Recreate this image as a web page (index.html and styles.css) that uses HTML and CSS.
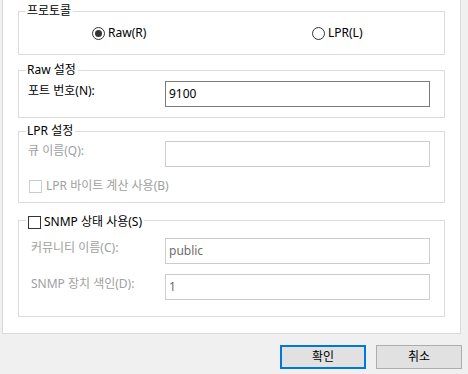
FILE: index.html
```html
<!DOCTYPE html>
<html lang="ko">
<head>
<meta charset="utf-8">
<link rel="stylesheet" href="styles.css">
</head>
<body>
<div class="panel">
  <div class="group g1">
    <div class="legend">프로토콜</div>
    <div class="radio-row">
      <label class="radio-item first"><span class="radio checked"></span><span>Raw(R)</span></label>
      <label class="radio-item"><span class="radio"></span><span>LPR(L)</span></label>
    </div>
  </div>
  <div class="group g2">
    <div class="legend">Raw 설정</div>
    <div class="field first-field">
      <span class="label">포트 번호(N):</span>
      <div class="input">9100</div>
    </div>
  </div>
  <div class="group g3">
    <div class="legend">LPR 설정</div>
    <div class="field first-field disabled">
      <span class="label">큐 이름(Q):</span>
      <div class="input"></div>
    </div>
    <label class="check-row disabled"><span class="check"></span><span>LPR 바이트 계산 사용(B)</span></label>
  </div>
  <div class="group g4">
    <div class="legend check-legend"><span class="check"></span><span>SNMP 상태 사용(S)</span></div>
    <div class="field first-field disabled indent">
      <span class="label">커뮤니티 이름(C):</span>
      <div class="input">public</div>
    </div>
    <div class="field second-field disabled indent">
      <span class="label">SNMP 장치 색인(D):</span>
      <div class="input">1</div>
    </div>
  </div>
</div>
<div class="buttons">
  <button class="btn default">확인</button>
  <button class="btn">취소</button>
</div>
</body>
</html>
```
FILE: styles.css
```css
* { box-sizing: border-box; }
html, body {
  margin: 0;
  padding: 0;
  width: 468px;
  height: 374px;
  overflow: hidden;
  background: #f0f0f0;
  font-family: "Noto Sans", "Noto Sans CJK KR", sans-serif;
  font-size: 12px;
  color: #000;
}
.panel {
  margin-left: 2px;
  width: 459px;
  background: #fff;
  border: 1px solid #d9d9d9;
  border-top: none;
  padding: 11px 15px 16px 15px;
}
.group {
  border: 1px solid #dcdcdc;
  box-sizing: content-box;
}
.g1 { height: 42px; }
.g2 { height: 46px; margin-top: 15px; }
.g3 { height: 70px; margin-top: 13px; }
.g4 { height: 95px; margin-top: 17px; }
.legend {
  display: flex;
  align-items: center;
  width: fit-content;
  height: 16px;
  line-height: 16px;
  margin: -9px 0 0 7px;
  padding: 0 2px 0 1px;
  background: #fff;
  white-space: nowrap;
}
.check-legend {
  margin-top: -7px;
  padding-left: 2px;
  gap: 3px;
}
.radio-row {
  display: flex;
  margin-top: 6px;
  padding-left: 73px;
  height: 16px;
}
.radio-item {
  display: flex;
  align-items: center;
  gap: 3px;
  line-height: 16px;
}
.radio-item.first { width: 220px; }
.radio {
  width: 13px;
  height: 13px;
  border: 1px solid #333;
  border-radius: 50%;
  display: flex;
  align-items: center;
  justify-content: center;
}
.radio.checked::after {
  content: "";
  width: 7px;
  height: 7px;
  border-radius: 50%;
  background: #333;
}
.field {
  display: flex;
  align-items: flex-start;
  padding-left: 9px;
}
.field.indent { padding-left: 12px; }
.field .label {
  width: 137px;
  line-height: 16px;
  margin-top: 2px;
  white-space: nowrap;
}
.field.indent .label { width: 134px; }
.g2 .first-field { margin-top: 3px; }
.g3 .first-field { margin-top: 2px; }
.g4 .first-field { margin-top: 8px; }
.second-field { margin-top: 10px; }
.input {
  width: 265px;
  height: 26px;
  border: 1px solid #7a7a7a;
  padding-left: 3px;
  line-height: 24px;
  background: #fff;
}
.disabled .label, .check-row.disabled { color: #a0a0a0; }
.disabled .input {
  border-color: #cccccc;
  color: #6d6d6d;
}
.check-row {
  display: flex;
  align-items: center;
  gap: 4px;
  height: 16px;
  line-height: 16px;
  margin: 11px 0 0 10px;
}
.check {
  width: 13px;
  height: 13px;
  border: 1px solid #333;
  background: #fff;
  flex: none;
}
.check-row.disabled .check { border-color: #cccccc; }
.buttons {
  display: flex;
  justify-content: flex-end;
  gap: 10px;
  margin: 11px 6px 0 0;
}
.btn {
  width: 86px;
  height: 24px;
  padding: 0;
  font: inherit;
  color: #000;
  background: #e1e1e1;
  border: 1px solid #adadad;
  line-height: 20px;
}
.btn.default {
  border: 2px solid #0078d7;
}
```
